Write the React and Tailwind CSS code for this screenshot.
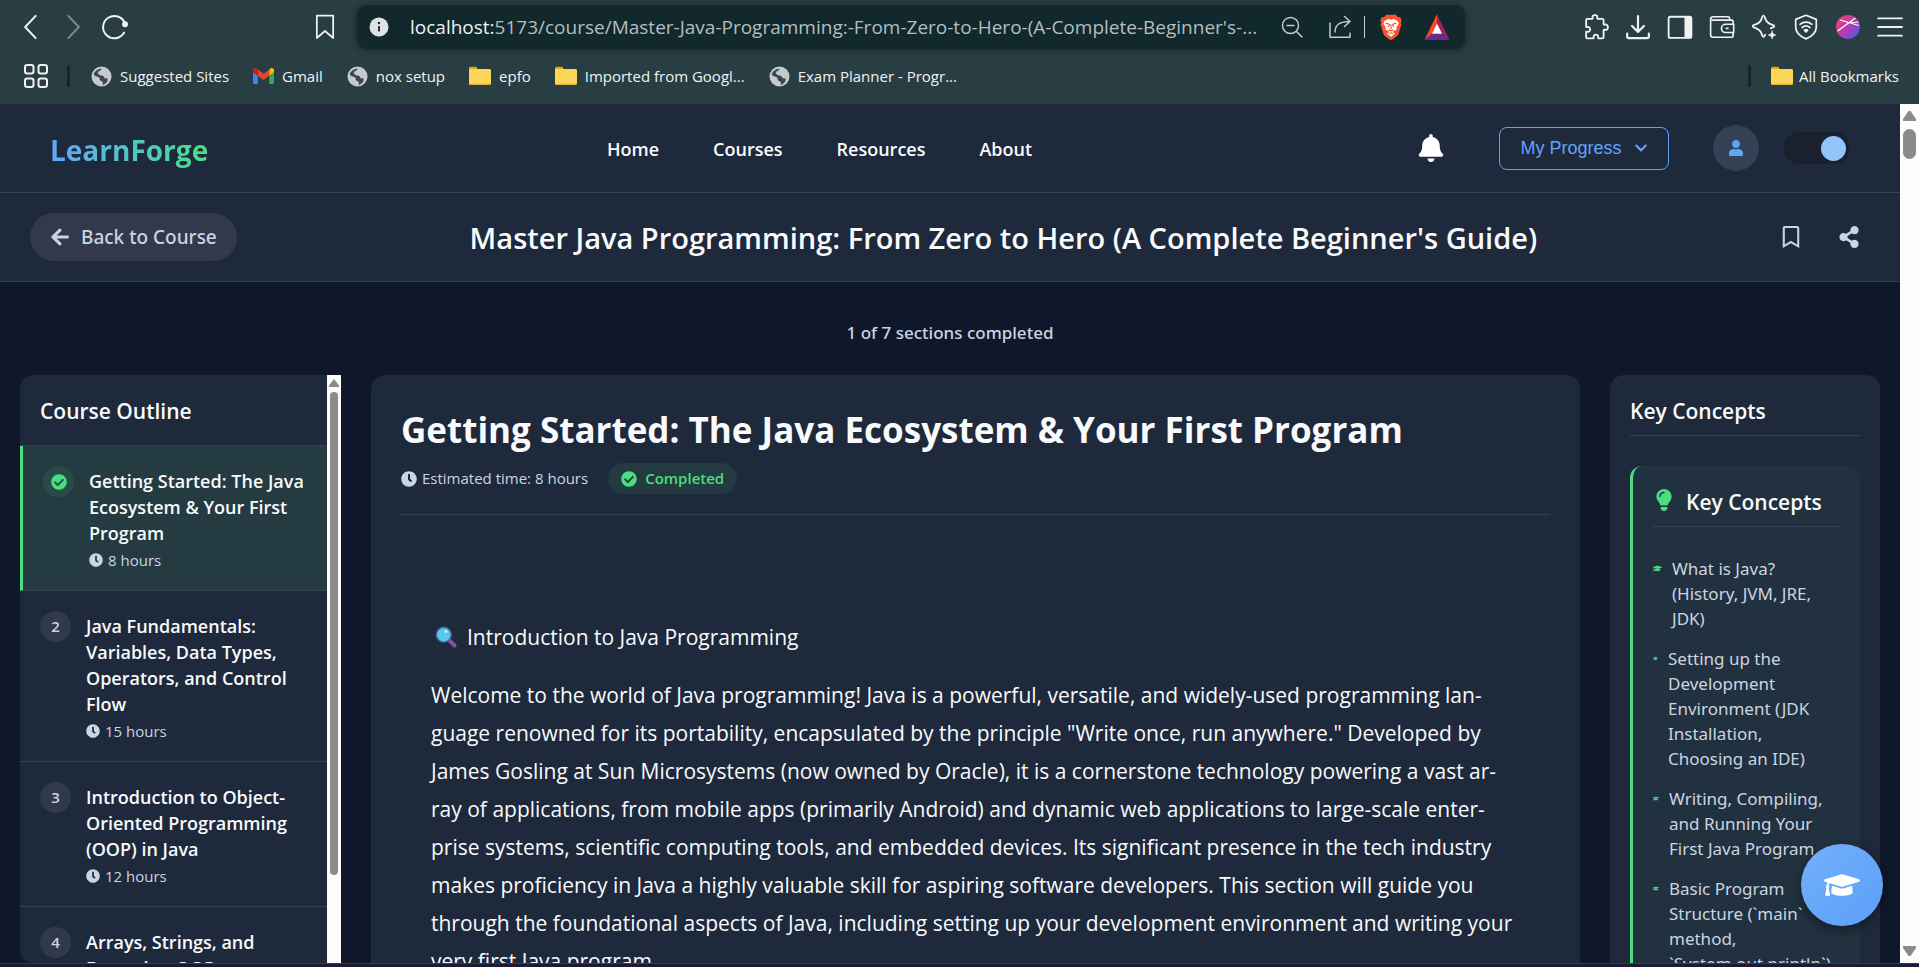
import React from "react";
import {
  FaArrowLeft,
  FaBell,
  FaCheckCircle,
  FaChevronDown,
  FaClock,
  FaGraduationCap,
  FaRegBookmark,
  FaShareAlt,
  FaUser,
} from "react-icons/fa";
import { FaLightbulb } from "react-icons/fa6";

/* ---------- Browser chrome icons ---------- */

function Stroke({ children, className = "size-6", width = 1.7 }) {
  return (
    <svg
      viewBox="0 0 24 24"
      className={className}
      fill="none"
      stroke="currentColor"
      strokeWidth={width}
      strokeLinecap="round"
      strokeLinejoin="round"
      aria-hidden="true"
    >
      {children}
    </svg>
  );
}

const BackIcon = () => (
  <Stroke className="size-7">
    <path d="M16 2.5 7 12l9 9.5" />
  </Stroke>
);
const ForwardIcon = () => (
  <Stroke className="size-7">
    <path d="m8 2.5 9 9.5-9 9.5" />
  </Stroke>
);
const ReloadIcon = () => (
  <Stroke className="size-7">
    <path d="M19.8 16.8A9.6 9.6 0 1 1 20.5 9" />
    <circle cx="20.6" cy="9.6" r="1.7" fill="currentColor" />
  </Stroke>
);
const SaveIcon = () => (
  <Stroke className="size-7" width={1.5}>
    <path d="M5 2.2h14v19.2l-7-6-7 6z" />
  </Stroke>
);
const InfoIcon = () => (
  <svg viewBox="0 0 20 20" className="size-5 shrink-0" aria-hidden="true">
    <circle cx="10" cy="10" r="9.5" fill="#dde3e3" />
    <path d="M10 9v5.5" stroke="#11272b" strokeWidth="1.8" />
    <circle cx="10" cy="6" r="1.2" fill="#11272b" />
  </svg>
);
const ZoomOutIcon = () => (
  <Stroke width={1.5}>
    <circle cx="10.5" cy="10.5" r="8" />
    <path d="m16.5 16.5 5.5 5.5M7 10.5h7" />
  </Stroke>
);
const ShareIcon = () => (
  <Stroke width={1.5}>
    <path d="M2 8v14.3h20v-4M7 17c0-7 4-10.500 15-10.500M16.500 1.500l5.500 5-5.500 5" />
  </Stroke>
);
const BraveIcon = () => (
  <svg viewBox="0 0 24 28" className="h-[27px] w-6" aria-hidden="true">
    <path d="M7 .8h10l2.300 2.500 2.200-.3 1.500 3.500-.8 2.500.7 1.500-3 10c-.5 1.800-3.500 4-7.900 6.800C7.600 24.500 4.600 22.300 4.100 20.500l-3-10 .7-1.500L1 6.500 2.500 3l2.200.3z" fill="#fb542b" />
    <path d="m12 6 3-.8 4 2.300 1 2.500-2.500 4 .5 2-4.500 2.500 2.500 2-4 3-4-3 2.500-2L6 16l.5-2L4 10l1-2.500 4-2.300z" fill="#fff" />
    <path d="m6.500 9.500 4 1.200-1.200 2.800M17.500 9.500l-4 1.200 1.200 2.800M12 11v4.500M9.500 16.500l2.500 1 2.500-1M10 20.500l2-1 2 1" fill="none" stroke="#fb542b" strokeWidth="1.2" />
  </svg>
);
const BatIcon = () => (
  <svg viewBox="0 0 26 28" className="h-7 w-[26px]" aria-hidden="true">
    <path d="M13 1 .5 27 8.500 20.500 13 11z" fill="#ff4724" />
    <path d="M13 1l12.500 26-8-6.500L13 11z" fill="#9e1f63" />
    <path d="M.5 27h25l-8-6.500h-9z" fill="#662d91" />
    <path d="m13 10.500 5 10.300H8z" fill="#fff" />
  </svg>
);
const PuzzleIcon = () => (
  <Stroke className="size-[26px]">
    <path d="M4 4.500h4.300c.6 0 .8-.5.6-1-.6-1.500.4-2.500 2.100-2.500s2.700 1 2.100 2.500c-.2.500 0 1 .6 1h4.200c.7 0 1.100.4 1.100 1.100v3.700c0 .6.4.8 1 .6 1.600-.6 3 .5 3 2.300s-1.400 2.900-3 2.300c-.6-.2-1 0-1 .6v6.300c0 .7-.4 1.100-1.100 1.100h-3.400c-.6 0-.8-.4-.6-1 .4-1.400-.5-2.500-2-2.500s-2.400 1.100-2 2.500c.2.600 0 1-.6 1H4c-.7 0-1.100-.4-1.100-1.100v-4.500c0-.6.4-.8 1-.6 1.500.5 2.700-.5 2.700-2.100s-1.200-2.600-2.700-2.100c-.6.200-1 0-1-.6V5.600c0-.7.4-1.100 1.100-1.100z" />
  </Stroke>
);
const DownloadIcon = () => (
  <Stroke className="size-[26px]" width={2}>
    <path d="M12 2v14M6.500 11l5.500 5.500 5.500-5.500M2 18v2.800c0 1 .4 1.400 1.400 1.400h17.200c1 0 1.400-.4 1.400-1.400V18" />
  </Stroke>
);
const PanelIcon = () => (
  <Stroke className="size-[26px]">
    <rect x="1.500" y="2.500" width="21" height="19.500" rx="1.500" />
    <path d="M17 3v18.500h4.500V3z" fill="currentColor" />
  </Stroke>
);
const WalletIcon = () => (
  <Stroke className="size-[26px]" width={1.5}>
    <path d="M22.300 9V7.300c0-1-.6-1.600-1.600-1.600H3M19 5.500V4c0-1-.5-1.500-1.500-1.500H4C2.600 2.500 1.500 3.400 1.500 4.800v14.400c0 1.400.8 2.300 2.300 2.300h16.900c1 0 1.600-.6 1.600-1.600V17.500" />
    <path d="M22.800 9.500h-7.500a3.800 3.800 0 0 0 0 7.600h7.500zM16 13.300h1.500" />
  </Stroke>
);
const SparkIcon = () => (
  <Stroke className="size-[26px]">
    <path d="M11.500 1.500c.9 0 1.100.9 1.400 2 .8 3.300 2 4.700 5.200 5.900 1.800.7 3.400.9 3.400 1.900s-1.600 1.300-3.200 1.800M11.500 1.500c-.9 0-1.100.9-1.400 2-.8 3.300-2 4.700-5.200 5.900-1.800.7-3.400.9-3.400 1.900s1.600 1.200 3.400 1.900c3.200 1.200 4.400 2.600 5.200 5.900.3 1.100.5 2 1.400 2s1.200-.9 1.500-2" />
    <path d="M19.500 15.500c.4 2.500 1.300 3.300 3.700 3.900-2.400.5-3.300 1.300-3.700 3.800-.4-2.500-1.300-3.300-3.700-3.800 2.400-.6 3.300-1.400 3.700-3.900z" fill="currentColor" strokeWidth="0.5" />
  </Stroke>
);
const VpnIcon = () => (
  <Stroke className="size-[26px]" width={1.6}>
    <path d="M12 1.200 21.500 5v7c0 5-3.500 8.500-9.500 11C6 20.500 2.500 17 2.500 12V5z" />
    <path d="M6.500 9.500a8.500 8.500 0 0 1 11 0M8.500 12.500a5.500 5.500 0 0 1 7 0" />
    <path d="M10.500 15a2.500 2.500 0 0 1 3 0L12 16.600z" fill="currentColor" />
  </Stroke>
);
const ProfileIcon = () => (
  <svg viewBox="0 0 24 24" className="size-6" aria-hidden="true">
    <defs>
      <linearGradient id="profile" x1="0" y1="0" x2="1" y2="1">
        <stop offset="0" stopColor="#f8455f" />
        <stop offset="0.5" stopColor="#b83cb4" />
        <stop offset="1" stopColor="#3f5be6" />
      </linearGradient>
    </defs>
    <circle cx="12" cy="12" r="12" fill="url(#profile)" />
    <path d="M1.500 16 19.500 3M4 5l19 5.500M11 8 22.500 7" stroke="#fff" strokeWidth="1.200" fill="none" />
  </svg>
);
const MenuIcon = () => (
  <Stroke className="size-[26px]" width={1.700}>
    <path d="M1 4h22M1 12h22M1 20h22" />
  </Stroke>
);
const AppsIcon = () => (
  <Stroke width={2}>
    <rect x="1" y="1" width="8.500" height="8.500" rx="2.200" />
    <rect x="14.500" y="1" width="8.500" height="8.500" rx="2.200" />
    <rect x="1" y="14.500" width="8.500" height="8.500" rx="2.200" />
    <rect x="14.500" y="14.500" width="8.500" height="8.500" rx="2.200" />
  </Stroke>
);
const GlobeIcon = () => (
  <svg viewBox="0 0 22 22" className="size-[21px]" aria-hidden="true">
    <circle cx="11" cy="11" r="10.500" fill="#c6c9ce" />
    <path d="M12.500 2.500c-3 .5-2 2.500-4 3S7 8 9 9.500c1.500 1 4 .2 4.500 2s2.500 1 3.500 1.500.5 3-1 4.500-4 2.500-4 2.500 1.200-2.500 0-3.500-3-1-3-3-2.500-2-4.500-3-1.700-2.500-1-3.500 3-4.500 9-4.500z" fill="#3b4a50" />
    <path d="M13 4.500c1.500-.5 3.500 1 3 2.500s-3 .8-3.500 0-.5-2 .5-2.500z" fill="#c6c9ce" />
  </svg>
);
const FolderIcon = () => (
  <svg viewBox="0 0 22 20" className="h-5 w-[22px]" aria-hidden="true">
    <path d="M0 2.500C0 1.500.7.800 1.700.8h5.600L9 3.500h11v6H0z" fill="#e5a50f" />
    <path d="M0 4.500C0 3.500.8 3 1.800 3h18.400c1 0 1.800.7 1.800 1.700v12.500c0 1-.8 1.800-1.800 1.800H1.800c-1 0-1.800-.8-1.800-1.800z" fill="#fdd558" />
    <path d="M0 16.500c0 1.500.8 2.500 1.800 2.500h18.400c1 0 1.800-1 1.800-2.500-.3.800-1 1.200-1.800 1.200H1.800c-1 0-1.600-.4-1.800-1.200z" fill="#e3ae33" />
  </svg>
);
const GmailIcon = () => (
  <svg viewBox="52 42 88 66" className="h-4 w-[21px]" aria-hidden="true">
    <path fill="#4285f4" d="M58 108h14V74L52 59v43c0 3.320 2.690 6 6 6" />
    <path fill="#34a853" d="M120 108h14c3.320 0 6-2.690 6-6V59l-20 15" />
    <path fill="#fbbc04" d="M120 48v26l20-15v-8c0-7.420-8.470-11.650-14.400-7.200" />
    <path fill="#ea4335" d="M72 74V48l24 18 24-18v26L96 92" />
    <path fill="#c5221f" d="M52 51v8l20 15V48l-5.600-4.200c-5.940-4.450-14.400-.220-14.400 7.200" />
  </svg>
);
const MagnifierIcon = () => (
  <svg viewBox="0 0 22 22" className="size-[22px]" aria-hidden="true">
    <path d="m14 14 5.500 5.500" stroke="#8b4f96" strokeWidth="4" strokeLinecap="round" />
    <circle cx="8.800" cy="8.800" r="7.500" fill="#58c8ea" stroke="#4b5f8f" strokeWidth="1.400" />
    <circle cx="11" cy="5.500" r="1.500" fill="#c8f0fb" />
  </svg>
);

/* ---------- Data ---------- */

const bookmarks = [
  { label: "Suggested Sites", Icon: GlobeIcon },
  { label: "Gmail", Icon: GmailIcon },
  { label: "nox setup", Icon: GlobeIcon },
  { label: "epfo", Icon: FolderIcon },
  { label: "Imported from Googl...", Icon: FolderIcon },
  { label: "Exam Planner - Progr...", Icon: GlobeIcon },
];

const toolbarButtons = [
  { label: "Extensions", Icon: PuzzleIcon },
  { label: "Downloads", Icon: DownloadIcon },
  { label: "Sidebar", Icon: PanelIcon },
  { label: "Wallet", Icon: WalletIcon },
  { label: "Leo AI", Icon: SparkIcon },
  { label: "VPN", Icon: VpnIcon },
  { label: "Profile", Icon: ProfileIcon },
  { label: "Menu", Icon: MenuIcon },
];

const sections = [
  { title: "Getting Started: The Java Ecosystem & Your First Program", hours: 8, done: true },
  { title: "Java Fundamentals: Variables, Data Types, Operators, and Control Flow", hours: 15 },
  { title: "Introduction to Object-Oriented Programming (OOP) in Java", hours: 12 },
  { title: "Arrays, Strings, and Exception OOP", hours: 10 },
];

const concepts = [
  { text: "What is Java? (History, JVM, JRE, JDK)", icon: "w-[9px]" },
  { text: "Setting up the Development Environment (JDK Installation, Choosing an IDE)", icon: "w-[5px]" },
  { text: "Writing, Compiling, and Running Your First Java Program", icon: "w-[6px]" },
  { text: "Basic Program Structure (`main` method, `System.out.println`)", icon: "w-[6px]" },
];

/* ---------- Browser chrome ---------- */

function ToolButton({ label, children, className = "" }) {
  return (
    <button type="button" aria-label={label} className={`flex h-10 w-[42px] shrink-0 items-center justify-center ${className}`}>
      {children}
    </button>
  );
}

function BrowserChrome() {
  return (
    <div className="shrink-0 border-b border-[#2f3b40] bg-[#283e42] text-[#f0f3f3]">
      <div className="flex h-[54px] items-center pr-2 pl-[10px]">
        <ToolButton label="Back"><BackIcon /></ToolButton>
        <ToolButton label="Forward" className="text-[#7b8a8d]"><ForwardIcon /></ToolButton>
        <ToolButton label="Reload"><ReloadIcon /></ToolButton>
        <ToolButton label="Bookmark this page" className="ml-[168px]"><SaveIcon /></ToolButton>
        <div className="ml-[11px] flex h-11 min-w-0 flex-1 items-center rounded-[10px] bg-[#11282c] pr-[6px] pl-3 shadow-[0_1px_6px_rgba(0,0,0,0.45)]">
          <InfoIcon />
          <div className="ml-[21px] min-w-0 flex-1 truncate text-[19px] text-[#b4bebf]">
            <span className="text-[#eef2f2]">localhost:</span>5173/course/Master-Java-Programming:-From-Zero-to-Hero-(A-Complete-Beginner's-...
          </div>
          <button type="button" aria-label="Zoom out" className="flex w-12 justify-center text-[#c3cbcc]"><ZoomOutIcon /></button>
          <button type="button" aria-label="Share" className="flex w-12 justify-center text-[#c3cbcc]"><ShareIcon /></button>
          <span className="h-[22px] w-px bg-[#c3cbcc]" />
          <button type="button" aria-label="Brave Shields" className="ml-[2px] flex w-12 justify-center"><BraveIcon /></button>
          <button type="button" aria-label="Brave Rewards" className="flex w-11 justify-center"><BatIcon /></button>
        </div>
        <div className="ml-[110px] flex">
          {toolbarButtons.map(({ label, Icon }) => (
            <ToolButton key={label} label={label}><Icon /></ToolButton>
          ))}
        </div>
      </div>
      <div className="flex h-[49px] items-start pr-5 pl-6 text-[15px]">
        <button type="button" aria-label="Apps" className="mt-[10px]"><AppsIcon /></button>
        <span className="mt-[11px] ml-[19px] h-[22px] w-[3px] rounded bg-[#11282c]" />
        <div className="mt-[10px] ml-[21px] flex gap-6">
          {bookmarks.map(({ label, Icon }) => (
            <a key={label} href="#" className="flex h-6 items-center gap-2 whitespace-nowrap">
              <Icon />
              {label}
            </a>
          ))}
        </div>
        <div className="mt-[10px] ml-auto flex h-6 items-center">
          <span className="mr-5 h-[22px] w-[3px] rounded bg-[#11282c]" />
          <a href="#" className="flex items-center gap-[6px] whitespace-nowrap">
            <FolderIcon />
            All Bookmarks
          </a>
        </div>
      </div>
    </div>
  );
}

/* ---------- Page ---------- */

function TopNav() {
  return (
    <header className="flex h-[89px] shrink-0 items-center border-b border-[#334155] bg-[#1e293b] px-[50px]">
      <a href="#" className="w-[557px] shrink-0 pt-1">
        <span className="bg-gradient-to-r from-[#60a5fa] to-[#4ade80] bg-clip-text text-[28px] font-bold text-transparent">
          LearnForge
        </span>
      </a>
      <nav className="flex gap-[54px] pt-[2px] text-[18px] font-semibold text-slate-50">
        <a href="#">Home</a>
        <a href="#">Courses</a>
        <a href="#">Resources</a>
        <a href="#">About</a>
      </nav>
      <div className="ml-auto flex items-center">
        <button type="button" aria-label="Notifications" className="text-white">
          <FaBell className="size-7" />
        </button>
        <button
          type="button"
          className="ml-[54px] flex h-[43px] w-[170px] items-center justify-center gap-3 rounded-lg border border-[#60a5fa] font-['Liberation_Sans',Arial,sans-serif] text-[18px] text-[#60a5fa]"
        >
          My Progress
          <FaChevronDown className="size-[14px]" />
        </button>
        <button type="button" aria-label="Account" className="ml-11 flex size-[46px] items-center justify-center rounded-full bg-[#334155] text-[#60a5fa]">
          <FaUser className="size-4" />
        </button>
        <input
          type="checkbox"
          role="switch"
          aria-label="Dark mode"
          defaultChecked
          className="ml-[25px] flex h-8 w-[66px] appearance-none items-center justify-end rounded-full bg-[#1a202c] pr-1 before:size-[25px] before:rounded-full before:bg-[#93c5fd]"
        />
      </div>
    </header>
  );
}

function CourseHeader() {
  return (
    <div className="flex h-[89px] shrink-0 items-center justify-between border-b border-[#334155] bg-[#1e293b] px-[30px]">
      <button type="button" className="flex h-12 items-center gap-[11px] rounded-full bg-[#31394a] px-5 font-['Noto_Sans','Open_Sans',sans-serif] text-[19px] font-medium text-[#cbd5e1]">
        <FaArrowLeft className="size-5" />
        Back to Course
      </button>
      <h1 className="pt-[2px] text-[29px] font-semibold whitespace-nowrap text-slate-50">
        Master Java Programming: From Zero to Hero (A Complete Beginner's Guide)
      </h1>
      <div className="flex gap-9 pr-[10px] pl-[10px] text-[#cbd5e1]">
        <button type="button" aria-label="Bookmark course">
          <FaRegBookmark className="size-[22px]" />
        </button>
        <button type="button" aria-label="Share course">
          <FaShareAlt className="size-[22px]" />
        </button>
      </div>
    </div>
  );
}

function Outline() {
  return (
    <aside className="flex overflow-hidden rounded-l-[14px] bg-[#1e293b]">
      <div className="min-w-0 flex-1">
        <h2 className="flex h-[71px] items-center border-b border-[#334155] px-5 pt-1 text-[21px] font-semibold text-slate-50">
          Course Outline
        </h2>
        <ol>
          {sections.map(({ title, hours, done }, i) => (
            <li
              key={title}
              className={`flex gap-[15px] border-b border-[#334155] py-5 pr-4 ${done ? "border-l-[3px] border-l-[#4ade80] bg-[#243b41] pl-5" : "pl-5"}`}
            >
              <span
                className={`flex size-[31px] shrink-0 items-center justify-center rounded-full text-[15px] font-semibold ${done ? "bg-[#274c48] text-[#4ade80]" : "bg-[#313a4b] text-[#cbd5e1]"}`}
              >
                {done ? <FaCheckCircle className="size-4" /> : i + 1}
              </span>
              <div className="pt-[2px]">
                <h3 className="text-[18px] leading-[26px] font-semibold text-slate-50">{title}</h3>
                <p className="flex h-6 items-center gap-[5px] pt-1 text-[15px] text-[#cbd5e1]">
                  <FaClock className="size-[14px]" />
                  {hours} hours
                </p>
              </div>
            </li>
          ))}
        </ol>
      </div>
      <div className="flex w-[14px] shrink-0 flex-col items-center bg-[#fcfcfc] pt-1">
        <svg viewBox="0 0 10 8" className="h-2 w-[10px]" aria-hidden="true">
          <path d="M5 0 10 6.500V8H0V6.500z" fill="#8b8b8b" />
        </svg>
        <span className="mt-[5px] h-[483px] w-2 rounded-full bg-[#8b8b8b]" />
      </div>
    </aside>
  );
}

function Lesson() {
  return (
    <main className="rounded-t-[14px] bg-[#1e293b] px-[30px] pt-7">
      <div className="border-b border-[#334155] pb-5">
        <h2 className="text-[35px] leading-[54px] font-bold text-slate-50">
          Getting Started: The Java Ecosystem &amp; Your First Program
        </h2>
        <div className="mt-[6px] flex items-center gap-5 text-[15px] text-[#cbd5e1]">
          <span className="flex items-center gap-[5px]">
            <FaClock className="size-4" />
            Estimated time: 8 hours
          </span>
          <span className="flex h-[31px] items-center gap-2 rounded-full bg-[#233a40] px-[13px] font-semibold text-[#4ade80]">
            <FaCheckCircle className="size-4" />
            Completed
          </span>
        </div>
      </div>
      <article className="px-[30px] pt-[101px] text-slate-50">
        <h3 className="flex items-center gap-[10px] pl-1 text-[21px] leading-[42px]">
          <MagnifierIcon />
          Introduction to Java Programming
        </h3>
        <p className="mt-[18px] text-[21px] leading-[38px]">
          Welcome to the world of Java programming! Java is a powerful, versatile, and widely-used programming
          lan&shy;guage renowned for its portability, encapsulated by the principle "Write once, run anywhere."
          Developed by James Gosling at Sun Microsystems (now owned by Oracle), it is a cornerstone technology
          powering a vast ar&shy;ray of applications, from mobile apps (primarily Android) and dynamic web
          applications to large-scale enter&shy;prise systems, scientific computing tools, and embedded devices. Its
          significant presence in the tech industry makes proficiency in Java a highly valuable skill for aspiring
          software developers. This section will guide you through the foundational aspects of Java, including setting
          up your development environment and writing your very first Java program.
        </p>
      </article>
    </main>
  );
}

function KeyConcepts() {
  return (
    <aside className="rounded-t-[14px] bg-[#1e293b] px-5 pt-5">
      <h2 className="border-b border-[#334155] pb-2 text-[21px] leading-8 font-semibold text-slate-50">
        Key Concepts
      </h2>
      <section className="mt-[30px] rounded-t-xl border-l-[3px] border-[#4ade80] bg-[#21313f] px-5 pt-5">
        <h3 className="flex items-center gap-[11px] border-b border-[#334155] pb-2 text-[21px] leading-8 font-semibold text-slate-50">
          <FaLightbulb className="-mt-1 size-[22px] text-[#4ade80]" />
          Key Concepts
        </h3>
        <ul className="flex flex-col gap-[15px] pt-[29px] font-['Noto_Sans','Open_Sans',sans-serif] text-[17px] leading-[25px] text-[#cbd5e1]">
          {concepts.map(({ text, icon }) => (
            <li key={text} className="flex gap-[10px]">
              <FaGraduationCap className={`h-[25px] shrink-0 text-[#4ade80] ${icon}`} />
              <span>{text}</span>
            </li>
          ))}
        </ul>
      </section>
    </aside>
  );
}

function PageScrollbar() {
  return (
    <div className="flex w-[19px] shrink-0 flex-col items-center bg-[#fcfcfc] py-[7px]">
      <svg viewBox="0 0 13 10" className="h-[10px] w-[13px]" aria-hidden="true">
        <path d="M5.500 0h2L13 8v2H0V8z" fill="#8b8b8b" />
      </svg>
      <span className="mt-2 h-[30px] w-[13px] rounded-full bg-[#8b8b8b]" />
      <svg viewBox="0 0 13 10" className="mt-auto h-[10px] w-[13px]" aria-hidden="true">
        <path d="M5.500 10h2L13 2V0H0v2z" fill="#8b8b8b" />
      </svg>
    </div>
  );
}

export default function App() {
  return (
    <div className="flex h-screen flex-col overflow-hidden bg-[#0f172a] font-['Open_Sans','Noto_Sans',sans-serif]">
      <BrowserChrome />
      <div className="relative flex min-h-0 flex-1">
        <div className="flex min-w-0 flex-1 flex-col overflow-hidden">
          <TopNav />
          <CourseHeader />
          <p className="flex h-[93px] shrink-0 items-center justify-center pt-2 font-['Noto_Sans','Open_Sans',sans-serif] text-[17px] font-medium text-[#cbd5e1]">
            1 of 7 sections completed
          </p>
          <div className="grid min-h-0 flex-1 grid-cols-[321px_minmax(0,1fr)_270px] grid-rows-[100%] gap-[30px] px-5">
            <Outline />
            <Lesson />
            <KeyConcepts />
          </div>
        </div>
        <PageScrollbar />
        <button
          type="button"
          aria-label="Open study assistant"
          className="absolute right-9 bottom-[37px] flex size-[82px] items-center justify-center rounded-full bg-gradient-to-br from-[#74b0fb] to-[#5a9ff8] text-white shadow-[0_4px_12px_rgba(0,0,0,0.4)]"
        >
          <FaGraduationCap className="size-9" />
        </button>
      </div>
      <div className="h-1 shrink-0 border-t border-[#3a3a4c] bg-[#1c1a38]" />
    </div>
  );
}
